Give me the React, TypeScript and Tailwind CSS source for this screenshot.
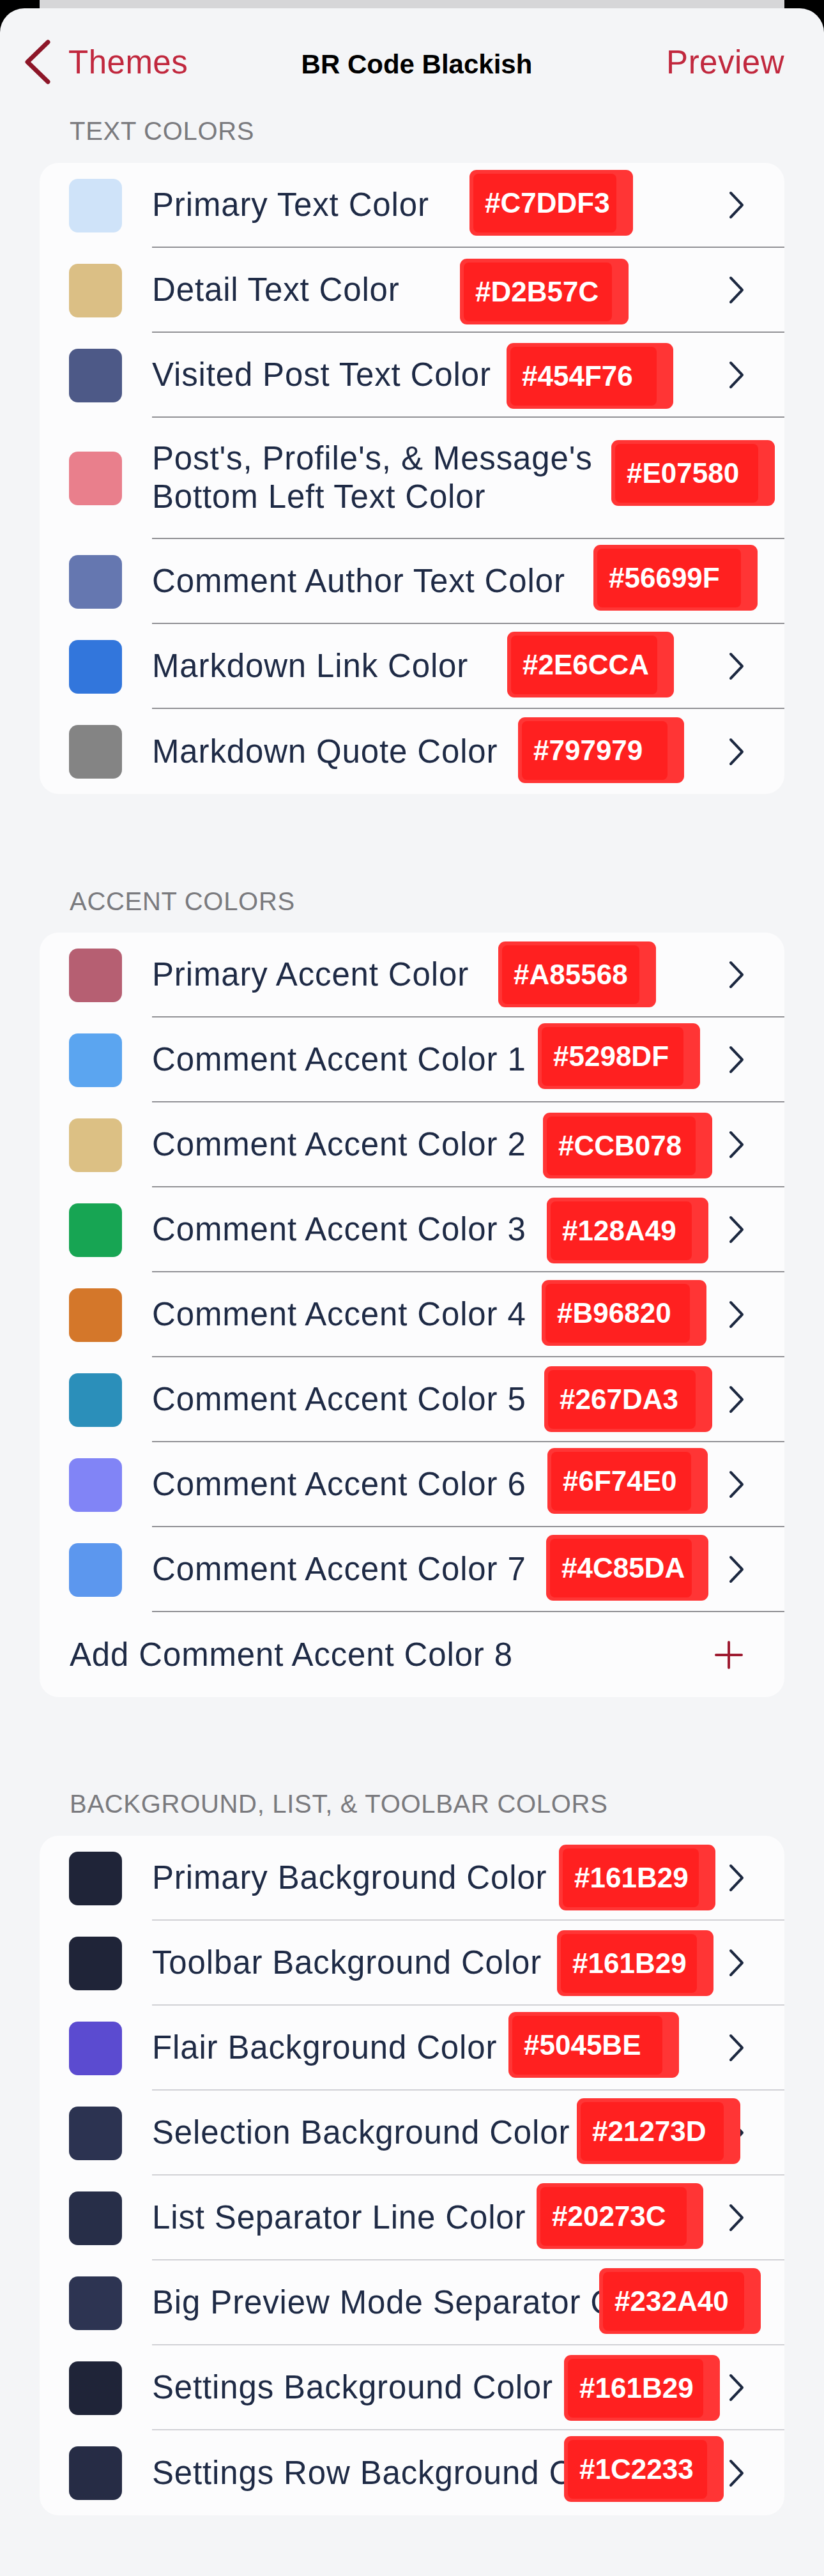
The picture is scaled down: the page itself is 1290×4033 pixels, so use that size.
import React from "react";

type Row = {
  label: string[];
  swatch: string;
  hex: string;
  pos: string;
  tall?: boolean;
};

const TEXT_ROWS: Row[] = [
  { label: ["Primary Text Color"], swatch: "bg-[#cfe3f9]", hex: "#C7DDF3", pos: "left-[673px] top-[11px] w-[256px]" },
  { label: ["Detail Text Color"], swatch: "bg-[#dbbf85]", hex: "#D2B57C", pos: "left-[658px] top-[17px] w-[264px]" },
  { label: ["Visited Post Text Color"], swatch: "bg-[#4d5987]", hex: "#454F76", pos: "left-[731px] top-[16px] w-[261px]" },
  {
    label: ["Post's, Profile's, & Message's", "Bottom Left Text Color"],
    swatch: "bg-[#e97f8c]",
    hex: "#E07580",
    pos: "left-[895px] top-[35px] w-[256px]",
    tall: true,
  },
  { label: ["Comment Author Text Color"], swatch: "bg-[#6577b0]", hex: "#56699F", pos: "left-[867px] top-[9px] w-[257px]" },
  { label: ["Markdown Link Color"], swatch: "bg-[#3276dc]", hex: "#2E6CCA", pos: "left-[732px] top-[12px] w-[261px]" },
  { label: ["Markdown Quote Color"], swatch: "bg-[#848484]", hex: "#797979", pos: "left-[749px] top-[13px] w-[260px]" },
];

const ACCENT_ROWS: Row[] = [
  { label: ["Primary Accent Color"], swatch: "bg-[#b65f72]", hex: "#A85568", pos: "left-[718px] top-[14px] w-[247px]" },
  { label: ["Comment Accent Color 1"], swatch: "bg-[#5ba5f0]", hex: "#5298DF", pos: "left-[780px] top-[9px] w-[254px]" },
  { label: ["Comment Accent Color 2"], swatch: "bg-[#dcc084]", hex: "#CCB078", pos: "left-[788px] top-[16px] w-[265px]" },
  { label: ["Comment Accent Color 3"], swatch: "bg-[#17a553]", hex: "#128A49", pos: "left-[794px] top-[16px] w-[253px]" },
  { label: ["Comment Accent Color 4"], swatch: "bg-[#d4772a]", hex: "#B96820", pos: "left-[786px] top-[12px] w-[258px]" },
  { label: ["Comment Accent Color 5"], swatch: "bg-[#2b8fba]", hex: "#267DA3", pos: "left-[790px] top-[14px] w-[263px]" },
  { label: ["Comment Accent Color 6"], swatch: "bg-[#8184f6]", hex: "#6F74E0", pos: "left-[795px] top-[9px] w-[251px]" },
  { label: ["Comment Accent Color 7"], swatch: "bg-[#5c97ee]", hex: "#4C85DA", pos: "left-[793px] top-[12px] w-[254px]" },
];

const BACKGROUND_ROWS: Row[] = [
  { label: ["Primary Background Color"], swatch: "bg-[#1f2438]", hex: "#161B29", pos: "left-[813px] top-[14px] w-[245px]" },
  { label: ["Toolbar Background Color"], swatch: "bg-[#1f2438]", hex: "#161B29", pos: "left-[810px] top-[15px] w-[245px]" },
  { label: ["Flair Background Color"], swatch: "bg-[#5b4bd0]", hex: "#5045BE", pos: "left-[734px] top-[10px] w-[267px]" },
  { label: ["Selection Background Color"], swatch: "bg-[#2c3351]", hex: "#21273D", pos: "left-[841px] top-[12px] w-[256px]" },
  { label: ["List Separator Line Color"], swatch: "bg-[#272e48]", hex: "#20273C", pos: "left-[778px] top-[12px] w-[261px]" },
  { label: ["Big Preview Mode Separator Color"], swatch: "bg-[#2d3452]", hex: "#232A40", pos: "left-[876px] top-[12px] w-[253px]" },
  { label: ["Settings Background Color"], swatch: "bg-[#1f2438]", hex: "#161B29", pos: "left-[821px] top-[15px] w-[244px]" },
  { label: ["Settings Row Background Color"], swatch: "bg-[#262c45]", hex: "#1C2233", pos: "left-[821px] top-[9px] w-[250px]" },
];

function Chevron() {
  return (
    <svg width="28" height="46" viewBox="0 0 28 46" className="shrink-0">
      <path d="M5 4 L23 23 L5 42" fill="none" stroke="#1c2840" strokeWidth="4" strokeLinecap="round" strokeLinejoin="round" />
    </svg>
  );
}

// red hex tag laid over each row
function Badge({ hex, pos }: { hex: string; pos: string }) {
  return (
    <div className={`absolute h-[103px] rounded-[11px] bg-[#ff3535] ${pos}`}>
      <div className="absolute bottom-[5px] left-[6px] right-[26px] top-[6px] rounded-[8px] bg-[#ff2020]" />
      <span className="relative flex h-full items-center pl-[24px] text-[44px] font-bold leading-none text-white">{hex}</span>
    </div>
  );
}

function ColorRow({ row, last, line }: { row: Row; last: boolean; line: string }) {
  return (
    <div className={`relative flex items-stretch ${row.tall ? "h-[190px]" : "h-[133px]"}`}>
      <div className="flex shrink-0 items-center pl-[46px] pr-[47px]">
        <div className={`h-[84px] w-[83px] rounded-[14px] ${row.swatch}`} />
      </div>
      <div className={`flex min-w-0 flex-1 items-center pr-[61px] ${last ? "" : `border-b-2 ${line}`}`}>
        <div className="min-w-0 flex-1 text-[51px] leading-[60px] tracking-[0.85px] text-[#1e2a45]">
          {row.label.map((l) => (
            <div key={l} className="truncate">
              {l}
            </div>
          ))}
        </div>
        <Chevron />
      </div>
      <Badge hex={row.hex} pos={row.pos} />
    </div>
  );
}

function SectionHeader({ title, className }: { title: string; className: string }) {
  return (
    <div className={`pl-[109px] text-[40px] leading-[47px] tracking-[0.7px] text-[#7a7a7e] ${className}`}>{title}</div>
  );
}

export default function App() {
  return (
    <div className="flex min-h-[4033px] flex-col bg-black font-['Liberation_Sans',Arial,sans-serif]">
      <div className="mx-[62px] h-[13px] bg-[#d6d6d8]" />
      <div className="flex-1 rounded-t-[38px] bg-[#f4f5f7]">
        {/* nav bar */}
        <div className="grid h-[168px] grid-cols-[1fr_auto_1fr] items-center px-[37px] pr-[62px]">
          <div className="flex items-center gap-[28px]">
            <svg width="42" height="70" viewBox="0 0 42 70">
              <path d="M38 4 L6 35 L38 66" fill="none" stroke="#8d1628" strokeWidth="7" strokeLinecap="round" strokeLinejoin="round" />
            </svg>
            <span className="text-[51px] leading-none tracking-[0.5px] text-[#c1283e]">Themes</span>
          </div>
          <div className="mt-[7px] pl-[40px] text-[42px] font-bold leading-none text-black">BR Code Blackish</div>
          <div className="text-right text-[51px] leading-none tracking-[0.5px] text-[#c1283e]">Preview</div>
        </div>

        <SectionHeader title="TEXT COLORS" className="mt-[1px]" />
        <div className="mx-[62px] mt-[26px] overflow-hidden rounded-[30px] bg-[#fcfcfd]">
          {TEXT_ROWS.map((r, i) => (
            <ColorRow key={r.hex + i} row={r} last={i === TEXT_ROWS.length - 1} line="border-[#909094]" />
          ))}
        </div>

        <SectionHeader title="ACCENT COLORS" className="mt-[145px]" />
        <div className="mx-[62px] mt-[25px] overflow-hidden rounded-[30px] bg-[#fcfcfd]">
          {ACCENT_ROWS.map((r, i) => (
            <ColorRow key={r.hex + i} row={r} last={false} line="border-[#909094]" />
          ))}
          <div className="flex h-[133px] items-center pl-[47px] pr-[65px]">
            <span className="flex-1 text-[51px] leading-none tracking-[0.85px] text-[#1e2a45]">Add Comment Accent Color 8</span>
            <svg width="44" height="44" viewBox="0 0 44 44">
              <path d="M22 2 V42 M2 22 H42" fill="none" stroke="#9e1b31" strokeWidth="4" strokeLinecap="round" />
            </svg>
          </div>
        </div>

        <SectionHeader title="BACKGROUND, LIST, & TOOLBAR COLORS" className="mt-[144px]" />
        <div className="mx-[62px] mt-[26px] overflow-hidden rounded-[30px] bg-[#fcfcfd]">
          {BACKGROUND_ROWS.map((r, i) => (
            <ColorRow key={r.hex + i} row={r} last={i === BACKGROUND_ROWS.length - 1} line="border-[#d1d1d5]" />
          ))}
        </div>
      </div>
    </div>
  );
}
